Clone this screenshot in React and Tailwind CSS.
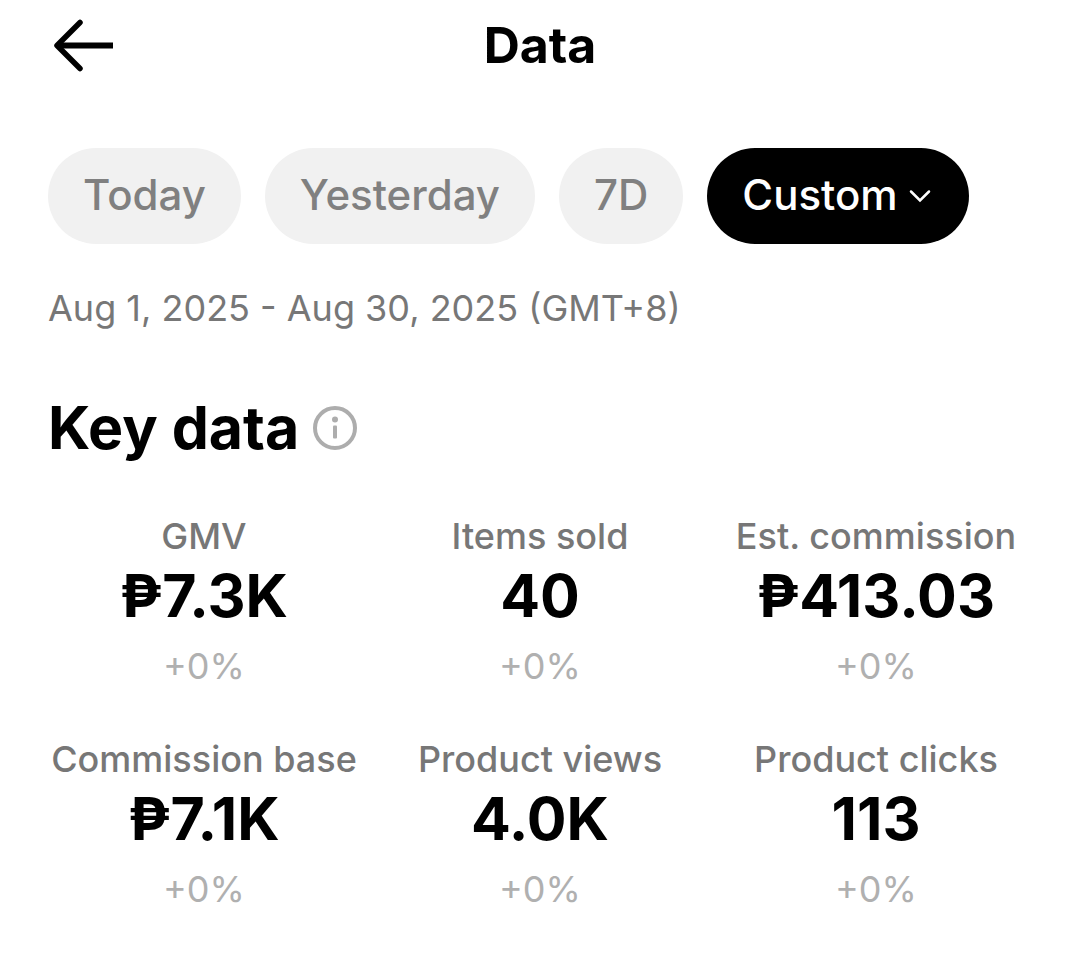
import { useState } from 'react'

const ranges = ['Today', 'Yesterday', '7D']

const metrics = [
  { label: 'GMV', value: '₱7.3K', change: '+0%' },
  { label: 'Items sold', value: '40', change: '+0%' },
  { label: 'Est. commission', value: '₱413.03', change: '+0%' },
  { label: 'Commission base', value: '₱7.1K', change: '+0%' },
  { label: 'Product views', value: '4.0K', change: '+0%' },
  { label: 'Product clicks', value: '113', change: '+0%' },
]

export default function App() {
  const [range, setRange] = useState('Custom')

  const pill = (name) =>
    `flex items-center h-24 px-[35px] pb-1 rounded-full text-[42px] font-medium ${range === name ? 'bg-black text-white' : 'bg-[#f1f1f1] text-[#808080]'}`

  return (
    <div className="min-h-screen bg-white text-black font-['Inter',sans-serif]">
      <header className="grid grid-cols-3 items-center h-[90px] px-12">
        <button aria-label="Back" className="justify-self-start">
          <svg width="72" height="60" viewBox="0 0 72 60" fill="none" stroke="currentColor" strokeWidth="5.5">
            <path d="M11 30.500H65" strokeWidth="6" />
            <path d="M32 7.500L9 30.500l23 23" strokeLinecap="round" strokeLinejoin="round" />
          </svg>
        </button>
        <h1 className="text-center text-[50px] font-bold">Data</h1>
      </header>

      <main className="px-12">
        <div className="flex gap-6 mt-[58px]">
          {ranges.map(r => (
            <button key={r} onClick={() => setRange(r)} className={pill(r)}>{r}</button>
          ))}
          <button onClick={() => setRange('Custom')} className={pill('Custom')}>
            Custom
            <svg className="ml-2" width="28" height="28" viewBox="0 0 28 28" fill="none" stroke="currentColor" strokeWidth="2.5" strokeLinecap="round">
              <path d="M5 11.500l9 9 9-9" />
            </svg>
          </button>
        </div>

        <p className="mt-10 text-[36px] leading-12 text-[#777777]">Aug 1, 2025 - Aug 30, 2025 (GMT+8)</p>

        <div className="flex items-center gap-3.5 mt-15">
          <h2 className="text-[59px] leading-[72px] font-bold">Key data</h2>
          <button aria-label="About key data" className="text-[#adadad]">
            <svg width="44" height="44" viewBox="0 0 44 44" fill="none" stroke="currentColor" strokeWidth="4">
              <circle cx="22" cy="22" r="20" />
              <rect x="20" y="19.500" width="4" height="13" rx="1" fill="currentColor" stroke="none" />
              <circle cx="22" cy="13.500" r="3" fill="currentColor" stroke="none" />
            </svg>
          </button>
        </div>
      </main>

      <dl className="grid grid-cols-3 gap-y-[45px] mt-12 px-9 text-center">
        {metrics.map(m => (
          <div key={m.label}>
            <dt className="text-[36px] leading-12 font-medium text-[#777777]">{m.label}</dt>
            <dd className="text-[59px] leading-[72px] font-bold">{m.value}</dd>
            <dd className="mt-2.5 text-[36px] leading-12 text-[#b0b0b0]">{m.change}</dd>
          </div>
        ))}
      </dl>
    </div>
  )
}
